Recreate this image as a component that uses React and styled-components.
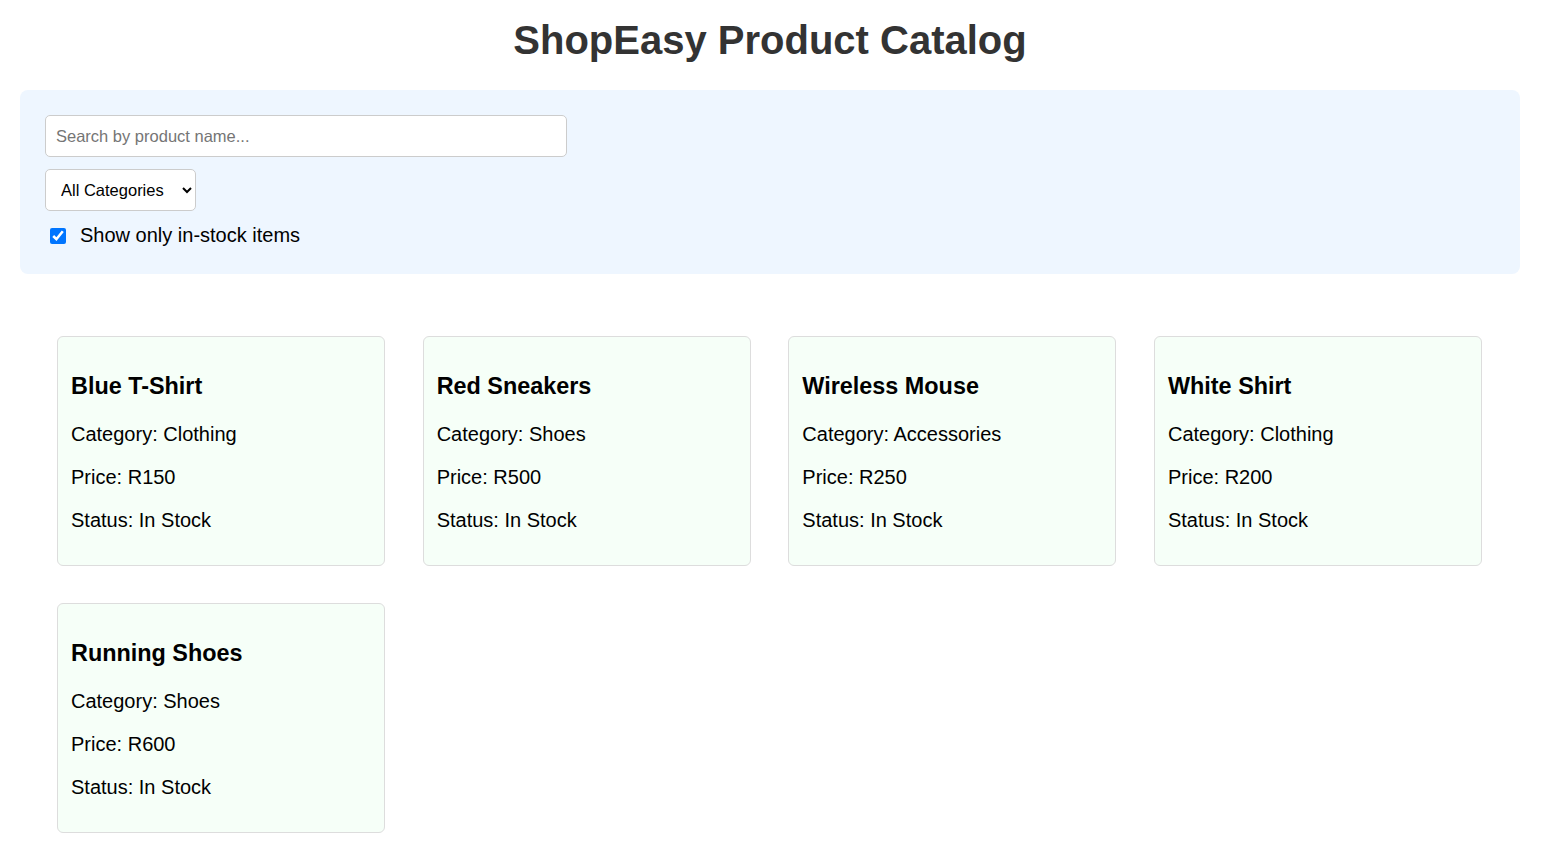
import React, { useState } from "react";
import styled, { createGlobalStyle } from "styled-components";

const GlobalStyle = createGlobalStyle`
  html, body { margin: 0; padding: 0; background: #ffffff; }
  body { font-family: "Liberation Sans", Arial, sans-serif; color: #000; }
  * { box-sizing: border-box; }
`;

const Page = styled.div`
  width: 1500px;
  margin-left: 20px;
  padding-top: 17px;
  padding-bottom: 30px;
`;

const Title = styled.h1`
  margin: 0 0 27px;
  text-align: center;
  font-size: 40px;
  line-height: 46px;
  font-weight: 700;
  color: #333333;
`;

const FilterPanel = styled.div`
  background: #eef6ff;
  border-radius: 8px;
  padding: 25px 25px 27px;
  display: flex;
  flex-direction: column;
  align-items: flex-start;
  gap: 12px;
`;

const SearchInput = styled.input`
  width: 522px;
  height: 42px;
  padding: 0 10px;
  border: 1px solid #cccccc;
  border-radius: 5px;
  font-family: "Liberation Sans", Arial, sans-serif;
  font-size: 16.5px;
  color: #000;
  background: #fff;
  outline: none;
  &::placeholder { color: #757575; }
`;

const Select = styled.select`
  width: 151px;
  height: 42px;
  padding: 0 10px 0 11px;
  border: 1px solid #cccccc;
  border-radius: 5px;
  font-family: "Liberation Sans", Arial, sans-serif;
  font-size: 16.5px;
  color: #000;
  background: #fff;
`;

const CheckRow = styled.label`
  display: flex;
  align-items: center;
  gap: 14px;
  padding-left: 5px;
  margin-top: 1px;
  font-size: 20px;
  line-height: 23px;
  color: #000;
  cursor: pointer;
`;

const CheckBox = styled.input`
  width: 16px;
  height: 16px;
  margin: 0;
  accent-color: #0075ff;
`;

const Grid = styled.div`
  display: grid;
  grid-template-columns: repeat(4, 328px);
  column-gap: 37.67px;
  row-gap: 37px;
  padding: 62px 0 0 37px;
`;

const Card = styled.div`
  background: #f6fff8;
  border: 1px solid #dddddd;
  border-radius: 6px;
  padding: 13px;
  font-size: 20px;
`;

const CardTitle = styled.h3`
  margin: 23.4px 0 22.4px;
  font-size: 23.4px;
  line-height: 27px;
  font-weight: 700;
  color: #000;
`;

const CardText = styled.p`
  margin: 20px 0;
  font-size: 20px;
  line-height: 23px;
  color: #000;
`;

const products = [
  { name: "Blue T-Shirt", category: "Clothing", price: 150 },
  { name: "Red Sneakers", category: "Shoes", price: 500 },
  { name: "Wireless Mouse", category: "Accessories", price: 250 },
  { name: "White Shirt", category: "Clothing", price: 200 },
  { name: "Running Shoes", category: "Shoes", price: 600 },
];

export default function App() {
  const [inStock, setInStock] = useState(true);
  return (
    <Page>
      <GlobalStyle />
      <Title>ShopEasy Product Catalog</Title>
      <FilterPanel>
        <SearchInput type="text" placeholder="Search by product name..." />
        <Select defaultValue="all">
          <option value="all">All Categories</option>
          <option value="Clothing">Clothing</option>
          <option value="Shoes">Shoes</option>
          <option value="Accessories">Accessories</option>
        </Select>
        <CheckRow>
          <CheckBox
            type="checkbox"
            checked={inStock}
            onChange={(e) => setInStock(e.target.checked)}
          />
          Show only in-stock items
        </CheckRow>
      </FilterPanel>
      <Grid>
        {products.map((p) => (
          <Card key={p.name}>
            <CardTitle>{p.name}</CardTitle>
            <CardText>Category: {p.category}</CardText>
            <CardText>Price: R{p.price}</CardText>
            <CardText>Status: In Stock</CardText>
          </Card>
        ))}
      </Grid>
    </Page>
  );
}
